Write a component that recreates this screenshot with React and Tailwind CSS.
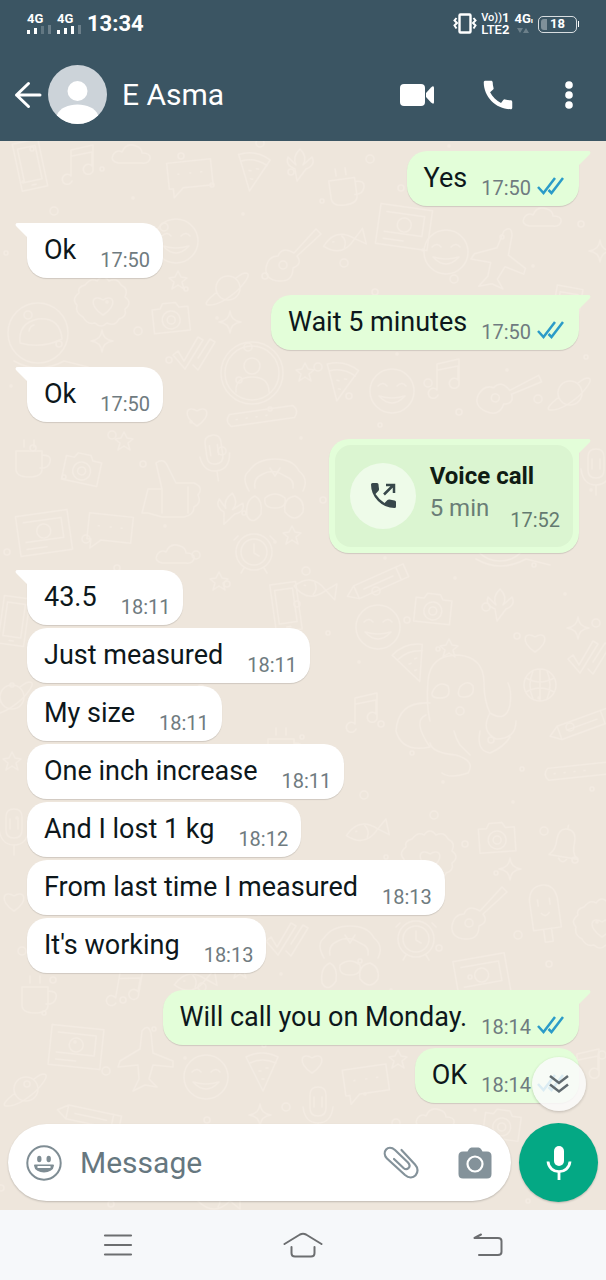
import { MdCall } from 'react-icons/md'

const GROUPS = [
  { out: true,  items: [{ text: 'Yes', time: '17:50' }] },
  { out: false, items: [{ text: 'Ok', time: '17:50' }] },
  { out: true,  items: [{ text: 'Wait 5 minutes', time: '17:50' }] },
  { out: false, items: [{ text: 'Ok', time: '17:50' }] },
  { out: true,  items: [{ call: 'Voice call', length: '5 min', time: '17:52' }] },
  {
    out: false,
    items: [
      { text: '43.5', time: '18:11' },
      { text: 'Just measured', time: '18:11' },
      { text: 'My size', time: '18:11' },
      { text: 'One inch increase', time: '18:11' },
      { text: 'And I lost 1 kg', time: '18:12' },
      { text: 'From last time I measured', time: '18:13' },
      { text: "It's working", time: '18:13' },
    ],
  },
  { out: true,  items: [{ text: 'Will call you on Monday.', time: '18:14' }, { text: 'OK', time: '18:14' }] },
]

// wallpaper doodles, each drawn around 0,0 and about 40 units wide
const DOODLES = {
  star: 'M0-9L3-3L9-2L4 2L6 9L0 5L-6 9L-4 2L-9-2L-3-3Z',
  sparkle: 'M0-11Q1-1 11 0Q1 1 0 11Q-1 1-11 0Q-1-1 0-11Z',
  heart: 'M0 10C-16 0-10-12 0-5C10-12 16 0 0 10Z',
  badge: 'M-18-18q6-8 12-4q6-8 12 0q8-4 12 4q8 4 4 12q8 6 0 12q2 8-6 10q-4 8-12 4q-6 6-12 0q-8 2-12-6q-8-4-6-12q-6-6 2-12q-2-6 6-8ZM0 12C-16 2-10-10 0-3C10-10 16 2 0 12Z',
  helmet: 'M-30 0a30 30 0 1 1 60 0a30 30 0 1 1-60 0M-18 10Q-20-10 0-14Q22-16 24 6Q4 16-18 10ZM-24 28q24 14 50 0l24 6M-9-2q1-5 5-6',
  camera: 'M-18-10h8l3-5h13l3 5h9v24h-36ZM-9 2a9 9 0 1 1 18 0a9 9 0 1 1-18 0M-4 2a4 4 0 1 1 8 0a4 4 0 1 1-8 0',
  planet: 'M-12 0a12 12 0 1 1 24 0a12 12 0 1 1-24 0M-11 4Q-26 16-20 17Q-8 18 10 2Q25-14 18-15Q14-15 8-10',
  ticks: 'M-20 2l5-4l6 10l14-24l5 3l-18 29ZM0 12l5 5l17-28l-5-3l-12 19',
  profile: 'M-31 0a31 31 0 1 1 62 0a31 31 0 1 1-62 0M-27 0a27 27 0 1 1 54 0a27 27 0 1 1-54 0M-8-7a8 8 0 1 1 16 0a8 8 0 1 1-16 0M-16 19q-1-15 16-15t17 15',
  pill: 'M-32-6h64q6 6 0 12h-64q-6-6 0-12ZM-26 0h1M-16 0h1M-6 0h1M4 0h1',
  mic: 'M-8-14q0-8 8-8t8 8v13q0 8-8 8t-8-8ZM-15-2q2 16 15 16t15-16M0 14v10M-4-12v10M4-12v10',
  monkey: 'M-26 5q-8-14 0-20q8-12 26-12t24 12q10 8 4 20M-20 2q-2-10 8-14q10-6 22 2q10 4 8 12M-20 10q-10 4-8 20q6 10 14-2q2-14-6-18ZM20 10q-12 2-10 16q10 12 18 0q2-12-8-16ZM-10 12q10-8 20 0q2 10-10 10t-10-10ZM-5-18l5 8l5-8',
  thumb: 'M-28 0h14l-6-26q8-6 12 4l8 16h18q10 4 4 12q4 8-4 12q0 8-10 10h-22l-14-4h-6ZM-14 0v24M12-2v26',
  clock: 'M-18 0a18 18 0 1 1 36 0a18 18 0 1 1-36 0M-13 0a13 13 0 1 1 26 0a13 13 0 1 1-26 0M0-8v9l5 3M-16-16l-4 4M16-16l4 4M-10 16l-3 5M10 16l3 5',
  leaf: 'M0-14q8 8 3 16l9-8q4 8-6 12l-9 12l-2-12q-10-4-7-12l8 8q-4-8 4-16Z',
  smiley: 'M-22 0a22 22 0 1 1 44 0a22 22 0 1 1-44 0M-14-5q5-5 9 0M5-5q5-5 9 0M-13 5q13 14 26 0q-13 4-26 0',
  plane: 'M-4-28q6-8 9 2l2 20l20 8v6l-20-2l-4 14l8 8l-12-2l-12 6l6-12l-1-14l-20 2l2-6l20-12Z',
  cloud: 'M-14 8q-8-2-5-8q4-6 9-3q4-10 14-6q6 2 6 7q9 0 8 6q-2 5-8 4Z',
  card: 'M-26-20h52v40h-52ZM-19-13h38v20h-38M-7-2a7 7 0 1 1 14 0a7 7 0 1 1-14 0M-19 14h20',
  octopus: 'M-26 20Q-30 4-28-20Q-26-46 2-46Q28-44 28-18Q28 0 34 12Q50 22 54 4Q56-10 52-18M-22-12q6-8 14-3q4 12-8 12t-6-9ZM4-14q8-8 13-1q2 10-8 11t-5-10ZM-26 2Q-58 0-60 30Q-54 52-26 46Q-44 20-30 14M-26 42Q-24 52 0 54Q20 60 12 72Q-6 78-14 72M24 30Q20 50 34 52Q48 46 54 36M34 12Q24 30 40 38Q60 38 60 20M-2 30q2 8 6 14l10 10',
  globe: 'M-16 0a16 16 0 1 1 32 0a16 16 0 1 1-32 0M-14-7q14 8 28 0M-14 7q14-8 28 0M0-16v32M-7-14q-6 14 0 28M7-14q6 14 0 28',
  bell: 'M-14 12q6-6 5-16q0-12 9-12t9 12q-1 10 5 16ZM-4 14q4 6 8 0M0-16v-4',
  lolly: 'M-14 18v-30q2-14 14-14t14 14v30ZM-4 18v13h8v-13M-6-12v6M6-12v6M-4 2q4 5 8 0',
  pencil: 'M-34 6l10-7h54v14h-54ZM-24-1v14M22-1v14M-16 6h32',
  note: 'M-10 14a5 5 0 1 1-1-5v-26l22-5v26a5 5 0 1 1-1-5v-14l-20 4',
  phone: 'M-13-24h26v48h-26ZM-9-18h18v34h-18ZM-2 20h4',
  bubble: 'M-22-14h44v26h-30l-10 9v-9h-4ZM-12-2h1M0-2h1M11-2h1',
  fish: 'M-22 0q16-16 32 0l10-8v16l-10-8q-16 16-32 0ZM-12-2h1M-2-6q4 6 0 12',
  pizza: 'M-16-14q16-8 32 0l-15 34ZM-12-8q12-6 26 0M-3 0h2M4-3h2M0 8h2',
  cup: 'M-14-10h26v18q0 8-13 8t-13-8ZM12-6q10 0 8 7t-10 6M-6-14v-7M4-14v-7',
  guitar: 'M4 0l22-24l5 5l-24 22q6 8-4 12q0 14-14 13t-13-13q2-12 12-12q4-10 16-3ZM-11 12a4 4 0 1 1 8 0a4 4 0 1 1-8 0',
}

const PLACES = [
  ['phone', 30, 24, -12], ['note', 82, 26], ['cloud', 132, 14], ['bubble', 190, 34, -6], ['pizza', 252, 30, 10], ['leaf', 300, 22],
  ['cup', 344, 48, -8], ['card', 404, 86, 8], ['cloud', 543, 77], ['smiley', 446, 111], ['plane', 500, 118, 16], ['sparkle', 600, 110],
  ['smiley', 176, 100], ['planet', 228, 147], ['guitar', 290, 112], ['fish', 345, 100, -14], ['badge', 103, 162], ['helmet', 38, 192],
  ['camera', 171, 177, -6], ['star', 178, 139], ['sparkle', 102, 200], ['sparkle', 230, 181], ['ticks', 193, 212], ['profile', 252, 232],
  ['phone', 566, 170, 10], ['star', 305, 231], ['pill', 262, 275, -8], ['heart', 197, 275], ['mic', 215, 316, -8], ['monkey', 275, 345],
  ['thumb', 176, 348], ['leaf', 230, 366, 10], ['star', 292, 394], ['clock', 254, 411], ['pizza', 340, 240, 12], ['smiley', 392, 250],
  ['note', 448, 240], ['guitar', 506, 248, 20], ['planet', 570, 252], ['cup', 30, 320], ['camera', 82, 328, 12], ['star', 124, 300],
  ['card', 44, 392, -8], ['bubble', 110, 388, 6], ['cloud', 176, 414], ['mic', 596, 330], ['fish', 316, 448, 8], ['pencil', 376, 436, -24],
  ['camera', 433, 468, 6], ['leaf', 500, 462], ['sparkle', 578, 487], ['smiley', 378, 486], ['star', 219, 440], ['phone', 286, 466, -8],
  ['star', 449, 507], ['heart', 535, 501], ['ticks', 588, 516], ['octopus', 456, 560], ['globe', 540, 544], ['pizza', 412, 522, -20],
  ['pencil', 580, 578, -20], ['note', 366, 574], ['cup', 282, 608], ['pill', 580, 630, -6], ['fish', 368, 690, -12], ['camera', 497, 697, -4],
  ['bell', 565, 704, 10], ['badge', 430, 716], ['phone', 14, 480, 8], ['planet', 12, 556], ['star', 12, 620], ['mic', 14, 690],
  ['heart', 14, 760], ['helmet', 500, 390], ['lolly', 545, 770, -8], ['globe', 318, 752], ['sparkle', 510, 728], ['guitar', 476, 770],
  ['badge', 602, 784], ['clock', 416, 798], ['card', 482, 836, -10], ['monkey', 350, 812], ['ticks', 286, 798], ['star', 240, 828],
  ['cup', 36, 856], ['note', 128, 850, 10], ['fish', 196, 840, -10], ['card', 76, 906, 6], ['planet', 26, 948], ['plane', 146, 918],
  ['smiley', 206, 936], ['pizza', 262, 930], ['heart', 312, 922], ['bubble', 366, 940, -8], ['star', 398, 918], ['leaf', 24, 1010],
  ['pencil', 92, 970, 12], ['mic', 318, 968], ['sparkle', 260, 974], ['cloud', 436, 978], ['camera', 502, 984, 8], ['note', 588, 930], ['fish', 220, 1060],
]

const DOTS = Array.from({ length: 190 }, (_, i) => ({ x: (i * 137 + 23) % 606, y: (i * 211 + 41) % 1068, r: 1 + (i % 4) }))

function Wallpaper() {
  return (
    <svg className="absolute inset-0 h-full w-full" aria-hidden="true">
      <defs>
        <pattern id="doodles" width="606" height="1069" patternUnits="userSpaceOnUse">
          <g fill="none" stroke="#f3ebe2" strokeWidth="1.5" strokeLinecap="round" strokeLinejoin="round">
            {PLACES.map(([name, x, y, turn = 0]) => (
              <path key={`${x}-${y}`} d={DOODLES[name]} transform={`translate(${x} ${y}) rotate(${turn})`} />
            ))}
            {DOTS.map(({ x, y, r }) => <circle key={`${x}-${y}`} cx={x} cy={y} r={r} />)}
          </g>
        </pattern>
      </defs>
      <rect width="100%" height="100%" fill="url(#doodles)" />
    </svg>
  )
}

function Signal({ bars }) {
  return (
    <div className="flex flex-col">
      <span className="text-[13px] leading-3 font-bold">4G</span>
      <svg width="24" height="10" viewBox="0 0 24 10" fill="currentColor">
        <rect x="0" y="5" width="3" height="4" />
        <rect x="7" y="3" width="3" height="6" />
        <rect x="14" y="1" width="3" height="8" opacity={bars > 2 ? 1 : 0.2} />
        <rect x="21" y="0" width="3" height="9" opacity="0.25" />
      </svg>
    </div>
  )
}

function StatusBar() {
  return (
    <div className="flex h-12 items-center justify-between pr-[27px] pl-[27px]">
      <div className="flex items-center gap-[6px]">
        <Signal bars={2} />
        <Signal bars={3} />
        <span className="text-[22px] leading-6 font-bold">13:34</span>
      </div>
      <div className="flex items-center gap-1">
        <svg width="24" height="22" viewBox="0 0 24 22" fill="none" stroke="currentColor" strokeWidth="2">
          <rect x="6.500" y="1.500" width="11" height="18" rx="1" strokeWidth="2.400" />
          <path d="M3.500 5L1.500 7.500L4 10L1.500 12.500L3.500 15.500M20.500 5L22.500 7.500L20 10L22.500 12.500L20.500 15.500" />
        </svg>
        <div className="flex flex-col text-[13px] leading-3 font-medium">
          <span className="flex justify-between"><span className="text-[11px]">Vo))</span><b>1</b></span>
          <span>LTE<b>2</b></span>
        </div>
        <div className="flex flex-col pl-px">
          <span className="text-[13px] leading-3 font-bold">4G<span className="text-[8px]">ı</span></span>
          <svg width="16" height="8" viewBox="0 0 16 8" fill="currentColor" opacity="0.25">
            <path d="M3 1h6L6 6ZM9 6h6L12 1Z" />
          </svg>
        </div>
        <div className="flex items-center gap-px pl-px">
          <div className="relative flex h-[17px] w-[39px] items-center justify-center rounded-[5px] border border-white/80">
            <span className="absolute inset-y-[2px] left-[2px] w-[6px] rounded-l-[3px] bg-white/35" />
            <span className="text-[13px] leading-4 font-bold">18</span>
          </div>
          <span className="h-[6px] w-px bg-white" />
        </div>
      </div>
    </div>
  )
}

function Header() {
  return (
    <header className="bg-[#3b5563] text-white">
      <StatusBar />
      <div className="flex h-[93px] items-center pr-[21px] pl-[14px]">
        <button aria-label="Back" className="flex items-center">
          <svg width="28" height="28" viewBox="0 0 28 28" fill="none" stroke="currentColor" strokeWidth="3" strokeLinecap="round" strokeLinejoin="round">
            <path d="M26 14H2.500M14.500 2.500L2.500 14L14.500 25.500" />
          </svg>
        </button>
        <svg className="ml-[6px]" width="59" height="59" viewBox="0 0 59 59">
          <clipPath id="face"><circle cx="29.500" cy="29.500" r="29.500" /></clipPath>
          <g clipPath="url(#face)">
            <rect width="59" height="59" fill="#ccd3d9" />
            <circle cx="29.500" cy="26" r="10" fill="#fff" />
            <path d="M9 50C14 36 45 36 50 50V59H9Z" fill="#fff" />
          </g>
        </svg>
        <h1 className="flex-1 pl-[15px] text-[30px] leading-9">E Asma</h1>
        <button aria-label="Video call">
          <svg width="36" height="24" viewBox="0 0 36 24" fill="currentColor">
            <rect x="1" y="1" width="25" height="22" rx="4" />
            <path d="M27 10L32 4.500Q35 2 35 5V19Q35 22 32 19.500L27 14Z" />
          </svg>
        </button>
        <button aria-label="Voice call" className="ml-11"><MdCall size={38} /></button>
        <button aria-label="More options" className="ml-9 flex w-8 justify-center">
          <svg width="8" height="28" viewBox="0 0 8 28" fill="currentColor">
            <circle cx="4" cy="4" r="3.800" />
            <circle cx="4" cy="14" r="3.800" />
            <circle cx="4" cy="24" r="3.800" />
          </svg>
        </button>
      </div>
    </header>
  )
}

function Ticks() {
  return (
    <svg className="mb-[5px] ml-[6px]" width="27" height="18" viewBox="0 0 27 18" fill="none" stroke="#2b9bc8" strokeWidth="2.500">
      <path d="M1 10L6.500 16L18 1M11.500 13L14.500 16L26 1" />
    </svg>
  )
}

function Tail({ out }) {
  return out ? (
    <svg className="absolute top-0 -right-3" width="14" height="17" viewBox="0 0 14 17" fill="#e3fed9">
      <path d="M0 0H11Q14.500 0 13 3L2 14V17H0Z" />
    </svg>
  ) : (
    <svg className="absolute top-0 -left-3" width="14" height="17" viewBox="0 0 14 17" fill="#fff">
      <path d="M14 0H3Q-.5 0 1 3L12 14V17H14Z" />
    </svg>
  )
}

function CallCard({ call, length, time }) {
  return (
    <div className="flex items-center rounded-2xl bg-[#dbf5d1] py-[15px] pr-[13px] pl-[15px]">
      <div className="flex size-[66px] items-center justify-center rounded-full bg-[#eefbe9]">
        <svg width="28" height="28" viewBox="0 0 28 28" fill="#37474a">
          <path d="M2 2.500Q2 1 3.500 1H8Q9.500 1 9.500 2.500Q9.700 5 10 6.500Q10.300 8 9.300 9L6.500 12Q10 17.500 15.500 21L18.500 18Q19.500 17.200 20.500 17.500Q23 18.300 25.500 18.400Q27 18.500 27 20V24.500Q27 26 25.500 26Q16 26 9 19T2 2.500Z" />
          <path d="M15 12.500L24 3.500M17 3H25V11" fill="none" stroke="#37474a" strokeWidth="2.500" />
        </svg>
      </div>
      <div className="pb-2 pl-[14px]">
        <p className="text-2xl leading-8 font-bold text-[#101c14]">{call}</p>
        <p className="text-2xl leading-8 text-[#6a7d76]">{length}</p>
      </div>
      <span className="-ml-6 self-end text-xl leading-6 text-[#647a70]">{time}</span>
    </div>
  )
}

function Bubble({ item, out, first }) {
  return (
    <div className={[
      'relative flex items-end rounded-[20px] shadow-[0_1px_1px_rgba(0,0,0,0.13)]',
      out ? 'bg-[#e3fed9]' : 'bg-white',
      first && (out ? 'rounded-tr-none' : 'rounded-tl-none'),
      item.call ? 'p-[6px]' : 'pt-[9px] pb-[6px] pl-[17px]',
      !item.call && (out ? 'pr-[15px]' : 'pr-[13px]'),
    ].filter(Boolean).join(' ')}>
      {first && <Tail out={out} />}
      {item.call ? <CallCard {...item} /> : (
        <>
          <p className="mb-1 text-[27px] leading-9 text-[#0d171b]">{item.text}</p>
          <span className={`text-xl leading-6 text-[#6f7b80] ${out ? 'ml-[14px]' : 'ml-6'}`}>{item.time}</span>
          {out && <Ticks />}
        </>
      )}
    </div>
  )
}

function Composer() {
  return (
    <form className="relative mt-auto flex items-center gap-2 px-2 pb-2" onSubmit={(e) => e.preventDefault()}>
      <button type="button" aria-label="Scroll to latest" className="absolute right-5 bottom-full mb-3 flex size-[54px] items-center justify-center rounded-full bg-[#fafafa]/85 shadow-[0_1px_3px_rgba(0,0,0,0.2)]">
        <svg width="20" height="20" viewBox="0 0 20 20" fill="none" stroke="#616b70" strokeWidth="2.500">
          <path d="M1 2L10 9L19 2M1 10.500L10 17.500L19 10.500" />
        </svg>
      </button>
      <div className="flex h-[77px] min-w-0 flex-1 items-center rounded-full bg-white pr-[19px] pl-[18px] shadow-[0_1px_2px_rgba(0,0,0,0.2)]">
        <button type="button" aria-label="Emoji">
          <svg width="36" height="36" viewBox="0 0 36 36" fill="none" stroke="#7f8d94" strokeWidth="2">
            <circle cx="18" cy="18" r="16.700" />
            <ellipse cx="13.300" cy="14" rx="2.200" ry="3.200" fill="#7f8d94" stroke="none" />
            <ellipse cx="22.700" cy="14" rx="2.200" ry="3.200" fill="#7f8d94" stroke="none" />
            <path d="M9 20.500H27C26.500 28.500 9.500 28.500 9 20.500Z" fill="#7f8d94" strokeLinejoin="round" />
            <path d="M11.500 22H24.500" stroke="#fff" />
          </svg>
        </button>
        <input type="text" aria-label="Message" placeholder="Message" className="ml-[18px] min-w-0 flex-1 text-[30px] leading-9 outline-none placeholder:text-[#66777f]" />
        <button type="button" aria-label="Attach">
          <svg width="36" height="34" viewBox="0 0 36 34" fill="none" stroke="#84929a" strokeWidth="2.200" strokeLinecap="round">
            <path d="M18.500 4L32 18.500C39 26 30 36 22 29L4 12.500C-2 6 5-2 12 4L25 16.500C29 21 24 25 20.500 22L11 13" />
          </svg>
        </button>
        <button type="button" aria-label="Camera" className="ml-[39px]">
          <svg width="34" height="32" viewBox="0 0 34 32">
            <path d="M5 4.500H9.500L11 2Q12 .5 13.500 .5H20.500Q22 .5 23 2L24.500 4.500H29Q33.500 4.500 33.500 9V27Q33.500 31.500 29 31.500H5Q.5 31.500 .5 27V9Q.5 4.500 5 4.500Z" fill="#84929a" />
            <circle cx="17" cy="17" r="7.500" fill="none" stroke="#fff" strokeWidth="2.200" />
          </svg>
        </button>
      </div>
      <button type="button" aria-label="Record voice message" className="flex size-[79px] items-center justify-center rounded-full bg-[#04a884] text-white shadow-[0_1px_2px_rgba(0,0,0,0.2)]">
        <svg width="26" height="36" viewBox="0 0 26 36" fill="none" stroke="currentColor" strokeWidth="2.800">
          <rect x="8" y="1" width="10" height="20" rx="5" fill="currentColor" stroke="none" />
          <path d="M2 16.500C3 30 23 30 24 16.500M13 26.500V35" />
        </svg>
      </button>
    </form>
  )
}

function NavBar() {
  return (
    <nav className="grid h-[70px] grid-cols-3 place-items-center bg-[#f6f8fa] px-[26px] text-[#6c6e70]">
      <button aria-label="Recent apps">
        <svg width="30" height="24" viewBox="0 0 30 24" fill="none" stroke="currentColor" strokeWidth="2.200" strokeLinecap="round">
          <path d="M2 2.500H28M2 12H28M2 21.500H28" />
        </svg>
      </button>
      <button aria-label="Home">
        <svg width="40" height="26" viewBox="0 0 40 26" fill="none" stroke="currentColor" strokeWidth="2" strokeLinecap="round" strokeLinejoin="round">
          <path d="M1.500 12L17 2.500Q20 1 23 2.500L38.500 12M8.500 15V21Q8.500 24.500 12 24.500H28Q31.500 24.500 31.500 21V15" />
        </svg>
      </button>
      <button aria-label="Go back">
        <svg width="30" height="24" viewBox="0 0 30 24" fill="none" stroke="currentColor" strokeWidth="2" strokeLinecap="round" strokeLinejoin="round">
          <path d="M8 1.500L1.500 5H25Q28.500 5 28.500 8V19Q28.500 22 25 22H6" />
        </svg>
      </button>
    </nav>
  )
}

export default function App() {
  return (
    <div className="flex min-h-screen flex-col font-[Roboto,sans-serif]">
      <Header />
      <main className="relative flex flex-1 flex-col bg-[#eee6dc]">
        <Wallpaper />
        <div className="relative flex flex-col gap-[17px] px-[27px] pt-[10px]">
          {GROUPS.map(({ out, items }, g) => (
            <section key={g} className={`flex flex-col gap-[3px] ${out ? 'items-end' : 'items-start'}`}>
              {items.map((item, i) => <Bubble key={i} item={item} out={out} first={i === 0} />)}
            </section>
          ))}
        </div>
        <Composer />
      </main>
      <NavBar />
    </div>
  )
}
